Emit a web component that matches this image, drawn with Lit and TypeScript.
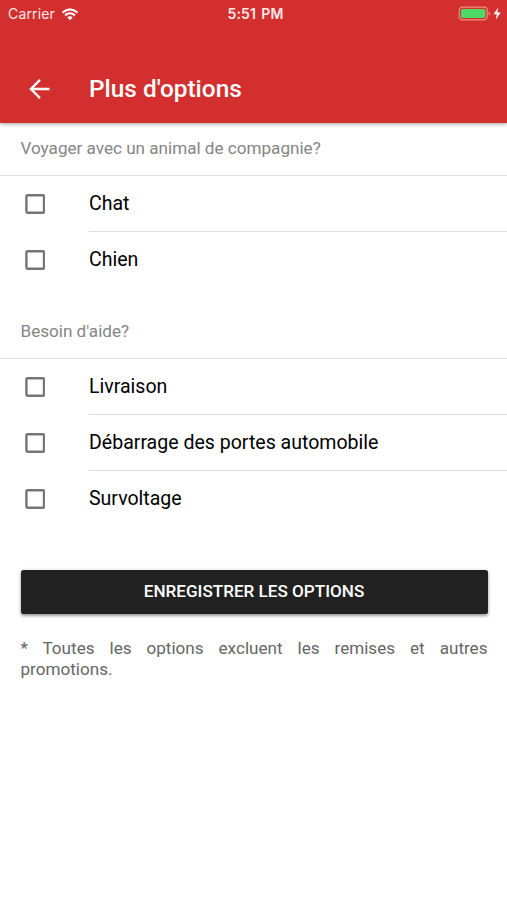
import { LitElement, html, css } from "lit";
import { customElement, property } from "lit/decorators.js";

@customElement("status-bar")
class StatusBar extends LitElement {
  static styles = css`
    :host {
      display: grid;
      grid-template-columns: 1fr auto 1fr;
      align-items: center;
      height: 27px;
      padding: 0 4px 0 8px;
      color: #fde9e8;
      font: 400 14px/28px Inter, sans-serif;
    }
    .left, .right { display: flex; align-items: center; height: 27px; }
    .left { gap: 6px; }
    .right { justify-content: flex-end; }
    .carrier { letter-spacing: 0.15px; }
    .time { font-weight: 600; font-size: 14px; letter-spacing: 0.15px; word-spacing: 1.5px; }
    svg { display: block; }
  `;
  render() {
    return html`
      <div class="left">
        <span class="carrier">Carrier</span>
        <svg width="18" height="13" viewBox="0 0 17 13" fill="none" stroke="#fff" stroke-width="2.1">
          <path d="M1 4.6Q8.5-1.9 16 4.6M3.6 7.4Q8.5 3.1 13.4 7.4" />
          <path d="M5.7 9.3Q8.5 7 11.3 9.3L8.5 12.2Z" fill="#fff" stroke="none" />
        </svg>
      </div>
      <span class="time">5:51 PM</span>
      <div class="right">
        <svg width="45" height="16" viewBox="0 0 45 16">
          <rect x="1.2" y="1.2" width="28" height="12.6" rx="3.2" fill="none" stroke="#ee8f85" stroke-width="1.2" />
          <rect x="3" y="3" width="24.4" height="9" rx="1.6" fill="#4cd964" />
          <path d="M30.6 5.5Q32.2 6.1 32.2 7.5T30.6 9.5Z" fill="#ee8f85" />
          <path d="M40.3 1.5L35.5 8.3H38.8L37.7 13.8L42.7 6.5H39.3Z" fill="#fff" />
        </svg>
      </div>
    `;
  }
}

@customElement("option-list")
class OptionList extends LitElement {
  @property() heading = "";
  @property({ attribute: false }) options: string[] = [];
  static styles = css`
    :host { display: block; }
    .heading {
      box-sizing: border-box;
      height: 55px;
      padding-left: 20.5px;
      border-bottom: 1px solid #e0e0e0;
      color: #858585;
      font-size: 17.1px;
      line-height: 54px;
    }
    .row { display: flex; align-items: center; height: 56px; }
    .box { display: block; margin: 0 44px 0 25px; flex: none; }
    .label {
      box-sizing: border-box;
      flex: 1;
      height: 56px;
      border-bottom: 1px solid #dedede;
      color: #000;
      font-size: 19.55px;
      line-height: 55px;
    }
    .row:last-child .label { border-bottom-color: transparent; }
  `;
  render() {
    return html`
      <div class="heading">${this.heading}</div>
      ${this.options.map(
        (o) => html`<div class="row">
          <svg class="box" width="20" height="20" viewBox="0 0 20 20">
            <rect x="1.4" y="1.2" width="17.6" height="17.6" rx="1.2" fill="none" stroke="#757575" stroke-width="2.4" />
          </svg>
          <span class="label">${o}</span>
        </div>`
      )}
    `;
  }
}

@customElement("app-root")
class AppRoot extends LitElement {
  static styles = css`
    :host {
      display: block;
      height: 900px;
      overflow: hidden;
      background: #fff;
      font-family: Roboto, sans-serif;
    }
    header {
      position: relative;
      height: 123px;
      background: #d32f2f;
      box-shadow: 0 1px 4px rgba(0, 0, 0, 0.38);
    }
    .toolbar { display: flex; align-items: center; height: 68px; padding: 28px 0 0 29px; }
    .toolbar svg { display: block; margin-right: 39px; }
    h1 { margin: 0; color: #fff; font-size: 24.4px; line-height: 30px; font-weight: 500; }
    .first { margin-top: -2px; }
    .second { margin-top: 16px; }
    .save {
      display: block;
      width: 467px;
      height: 44px;
      margin: 43px 0 0 20.5px;
      padding: 0 0 2px;
      border: 0;
      border-radius: 2.5px;
      background: #212121;
      color: #fff;
      font: 500 17.1px/42px Roboto, sans-serif;
      box-shadow: 0 2px 3px rgba(0, 0, 0, 0.3), 0 1px 4px rgba(0, 0, 0, 0.18);
    }
    .note {
      width: 467px;
      margin: 24px 0 0 20.5px;
      color: #666;
      font-size: 17.1px;
      line-height: 21px;
      text-align: justify;
    }
  `;
  render() {
    return html`
      <header>
        <status-bar></status-bar>
        <div class="toolbar">
          <svg width="21" height="21" viewBox="0 0 21 21" fill="none" stroke="#fff" stroke-width="2.3">
            <path d="M20.5 10H2.5M11 0.9L1.9 10L11 19.1" />
          </svg>
          <h1>Plus d'options</h1>
        </div>
      </header>
      <option-list class="first" heading="Voyager avec un animal de compagnie?" .options=${["Chat", "Chien"]}></option-list>
      <option-list
        class="second"
        heading="Besoin d'aide?"
        .options=${["Livraison", "Débarrage des portes automobile", "Survoltage"]}
      ></option-list>
      <button class="save">ENREGISTRER LES OPTIONS</button>
      <p class="note">* Toutes les options excluent les remises et autres promotions.</p>
    `;
  }
}
